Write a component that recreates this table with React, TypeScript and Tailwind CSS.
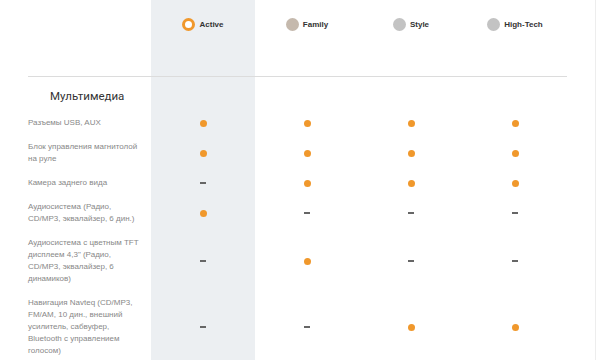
const trims = [
  { name: "Active", dot: "ring" },
  { name: "Family", dot: "bg-[#c5b9ad]" },
  { name: "Style", dot: "bg-[#c3c3c3]" },
  { name: "High-Tech", dot: "bg-[#c3c3c3]" },
]

type Row = { label: string; values: boolean[] }

const rows: Row[] = [
  { label: "Разъемы USB, AUX", values: [true, true, true, true] },
  { label: "Блок управления магнитолой на руле", values: [true, true, true, true] },
  { label: "Камера заднего вида", values: [false, true, true, true] },
  { label: "Аудиосистема (Радио, CD/MP3, эквалайзер, 6 дин.)", values: [true, false, false, false] },
  {
    label: "Аудиосистема с цветным TFT дисплеем 4,3\" (Радио, CD/MP3, эквалайзер, 6 динамиков)",
    values: [false, true, false, false],
  },
  {
    label: "Навигация Navteq (CD/MP3, FM/AM, 10 дин., внешний усилитель, сабвуфер, Bluetooth с управлением голосом)",
    values: [false, false, true, true],
  },
]

const Mark = ({ on }: { on: boolean }) =>
  on ? (
    <span className="block w-[7px] h-[7px] rounded-full bg-[#f0982c]" />
  ) : (
    <span className="block w-[6px] h-[2px] bg-[#666]" />
  )

export default function App() {
  return (
    <div className="w-[600px] h-[360px] overflow-hidden bg-white font-['Liberation_Sans',Arial,sans-serif]">
      <div className="w-[596px] h-full border-r border-[#ededed]">
        <div className="ml-[28px] grid grid-cols-[123px_104px_104px_104px_104px]">
          {/* header */}
          <div className="h-[77px] border-b border-[#dcdcdc]" />
          {trims.map((t, i) => (
            <div
              key={t.name}
              className={`h-[77px] border-b border-[#dcdcdc] flex justify-center pt-[18px] ${i === 0 ? "bg-[#eceff2]" : ""}`}
            >
              <div className="flex items-start gap-[4px] h-[14px]">
                {t.dot === "ring" ? (
                  <span className="w-[13px] h-[13px] rounded-full border-[3px] border-[#f0982c] bg-white" />
                ) : (
                  <span className={`w-[13px] h-[13px] rounded-full ${t.dot}`} />
                )}
                <span className="text-[8px] leading-[13px] font-bold text-[#333]">{t.name}</span>
              </div>
            </div>
          ))}

          {/* section title */}
          <div className="pl-[22px] pt-[11px] h-[34px] text-[11.5px] leading-[16px] text-[#333] font-['Roboto',sans-serif]">
            Мультимедиа
          </div>
          <div className="bg-[#eceff2]" />
          <div />
          <div />
          <div />

          {rows.map((r) => (
            <div key={r.label} className="contents">
              <div className="pr-[8px] py-[6px] text-[8px] leading-[12px] text-[#888]">
                {r.label}
              </div>
              {r.values.map((v, i) => (
                <div
                  key={i}
                  className={`flex items-center justify-center ${i === 0 ? "bg-[#eceff2]" : ""}`}
                >
                  <Mark on={v} />
                </div>
              ))}
            </div>
          ))}

          <div className="h-[40px]" />
          <div className="h-[40px] bg-[#eceff2]" />
        </div>
      </div>
    </div>
  )
}
